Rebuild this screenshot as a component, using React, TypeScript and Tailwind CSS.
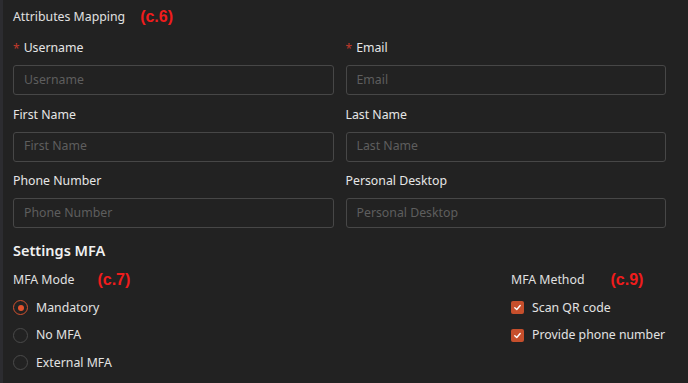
import React from "react";

const font = { fontFamily: '"Noto Sans", "Open Sans", sans-serif' };
const tag = { fontFamily: '"Liberation Sans", Arial, sans-serif' };

function Field({ label, required }: { label: string; required?: boolean }) {
  return (
    <div className="flex flex-col">
      <div className="h-[17px] flex items-center text-[12.3px] text-[#e6e6e6] leading-none">
        {required && <span className="text-[#c0392b] mr-[4px] text-[12px]">*</span>}
        {label}
      </div>
      <div className="mt-[8px] h-[30px] rounded-[3px] border border-[#474747] bg-[#222222] flex items-center px-[10px] text-[12.3px] text-[#5e5e5e]">
        {label}
      </div>
    </div>
  );
}

function Radio({ label, checked }: { label: string; checked?: boolean }) {
  return (
    <div className="flex items-center h-[27.5px]">
      <span className={`w-[15px] h-[15px] rounded-full border flex items-center justify-center ${checked ? "border-[#d2512f]" : "border-[#4a4a4a]"}`}>
        {checked && <span className="w-[6px] h-[6px] rounded-full bg-[#e2522d]" />}
      </span>
      <span className="ml-[8px] text-[12.3px] text-[#e3e3e3]">{label}</span>
    </div>
  );
}

function Check({ label }: { label: string }) {
  return (
    <div className="flex items-center h-[27.5px]">
      <span className="w-[13px] h-[13px] rounded-[2px] bg-[#c64f2c] flex items-center justify-center">
        <svg width="9" height="9" viewBox="0 0 10 10" fill="none">
          <path d="M2 5.2L4.2 7.2L8 2.8" stroke="#fff" strokeWidth="1.6" strokeLinecap="round" strokeLinejoin="round" />
        </svg>
      </span>
      <span className="ml-[8px] text-[12.3px] text-[#e3e3e3]">{label}</span>
    </div>
  );
}

export default function App() {
  return (
    <div className="w-[688px] h-[383px] bg-[#222222] flex overflow-hidden" style={font}>
      <div className="w-[3px] bg-[#2c2c30]" />
      <div className="flex-1 pl-[10px] pr-[22px] pt-[8px]">
        <div className="flex items-center h-[18px] text-[12.3px] text-[#e0e0e0]">
          Attributes Mapping
          <span className="ml-[15px] text-[#f01c1c] font-bold text-[16px]" style={tag}>(c.6)</span>
        </div>
        <div className="mt-[14px] grid grid-cols-2 gap-x-[12px] gap-y-[11.5px]">
          <Field label="Username" required />
          <Field label="Email" required />
          <Field label="First Name" />
          <Field label="Last Name" />
          <Field label="Phone Number" />
          <Field label="Personal Desktop" />
        </div>
        <div className="mt-[12px] text-[14.5px] font-semibold text-[#f0f0f0] h-[20px] leading-[20px]">Settings MFA</div>
        <div className="mt-[11px] flex">
          <div className="flex-1">
            <div className="flex items-center h-[18px] text-[12.3px] text-[#e0e0e0]">
              MFA Mode
              <span className="ml-[23px] text-[#f01c1c] font-bold text-[16px]" style={tag}>(c.7)</span>
            </div>
            <div className="mt-[5px] flex flex-col">
              <Radio label="Mandatory" checked />
              <Radio label="No MFA" />
              <Radio label="External MFA" />
            </div>
          </div>
          <div className="w-[155px]">
            <div className="flex items-center h-[18px] text-[12.3px] text-[#e0e0e0]">
              MFA Method
              <span className="ml-[26px] text-[#f01c1c] font-bold text-[16px]" style={tag}>(c.9)</span>
            </div>
            <div className="mt-[5px] flex flex-col">
              <Check label="Scan QR code" />
              <Check label="Provide phone number" />
            </div>
          </div>
        </div>
      </div>
    </div>
  );
}
